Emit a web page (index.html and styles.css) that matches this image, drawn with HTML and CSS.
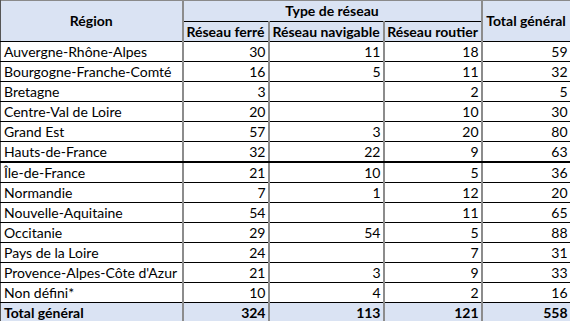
FILE: index.html
```html
<!DOCTYPE html>
<html lang="fr">
<head>
<meta charset="utf-8">
<link rel="stylesheet" href="styles.css">
</head>
<body>
<table class="pivot">
  <colgroup>
    <col class="c-region">
    <col class="c-ferre">
    <col class="c-nav">
    <col class="c-rout">
    <col class="c-total">
  </colgroup>
  <thead>
    <tr class="h1">
      <th rowspan="2" class="region-h">Région</th>
      <th colspan="3" class="type-h">Type de réseau</th>
      <th rowspan="2" class="total-h">Total général</th>
    </tr>
    <tr class="h2">
      <th>Réseau ferré</th>
      <th>Réseau navigable</th>
      <th>Réseau routier</th>
    </tr>
  </thead>
  <tbody>
    <tr><td>Auvergne-Rhône-Alpes</td><td>30</td><td>11</td><td>18</td><td>59</td></tr>
    <tr><td>Bourgogne-Franche-Comté</td><td>16</td><td>5</td><td>11</td><td>32</td></tr>
    <tr><td>Bretagne</td><td>3</td><td></td><td>2</td><td>5</td></tr>
    <tr><td>Centre-Val de Loire</td><td>20</td><td></td><td>10</td><td>30</td></tr>
    <tr><td>Grand Est</td><td>57</td><td>3</td><td>20</td><td>80</td></tr>
    <tr class="thick"><td>Hauts-de-France</td><td>32</td><td>22</td><td>9</td><td>63</td></tr>
    <tr><td>Île-de-France</td><td>21</td><td>10</td><td>5</td><td>36</td></tr>
    <tr><td>Normandie</td><td>7</td><td>1</td><td>12</td><td>20</td></tr>
    <tr><td>Nouvelle-Aquitaine</td><td>54</td><td></td><td>11</td><td>65</td></tr>
    <tr><td>Occitanie</td><td>29</td><td>54</td><td>5</td><td>88</td></tr>
    <tr><td>Pays de la Loire</td><td>24</td><td></td><td>7</td><td>31</td></tr>
    <tr><td>Provence-Alpes-Côte d'Azur</td><td>21</td><td>3</td><td>9</td><td>33</td></tr>
    <tr><td>Non défini*</td><td>10</td><td>4</td><td>2</td><td>16</td></tr>
  </tbody>
  <tfoot>
    <tr class="total"><td>Total général</td><td>324</td><td>113</td><td>121</td><td>558</td></tr>
  </tfoot>
</table>
</body>
</html>
```
FILE: styles.css
```css
html, body {
  margin: 0;
  padding: 0;
  background: #ffffff;
}

.pivot {
  border-collapse: collapse;
  table-layout: fixed;
  width: 570px;
  font-family: Lato, "Liberation Sans", sans-serif;
  font-size: 14px;
  color: #000;
  border-top: 1px solid #8a8a8a;
  border-left: 1px solid #555;
  border-right: 2px solid #222;
  border-bottom: 1px solid #000;
}

.c-region { width: 182px; }
.c-ferre { width: 86px; }
.c-nav { width: 115px; }
.c-rout { width: 98px; }
.c-total { width: 89px; }

.pivot th,
.pivot td {
  padding: 0 2px 0 3px;
  height: 19px;
  line-height: 18px;
  white-space: nowrap;
  border-left: 2px solid #8c8c8c;
  border-bottom: 1px solid #000;
}

.pivot th {
  background: #dae3f3;
  font-weight: 700;
  text-align: center;
  padding: 0 1px;
}

.pivot .h1 th { height: 20px; }
.pivot .region-h { vertical-align: middle; border-left: 1px solid #555; }
.pivot .type-h { vertical-align: middle; }

.pivot td { text-align: right; }
.pivot td:first-child {
  text-align: left;
  border-left: 1px solid #555;
}

.pivot tr.thick td { border-bottom: 2px solid #000; }

.pivot tr.total td {
  background: #dae3f3;
  font-weight: 700;
}
```
